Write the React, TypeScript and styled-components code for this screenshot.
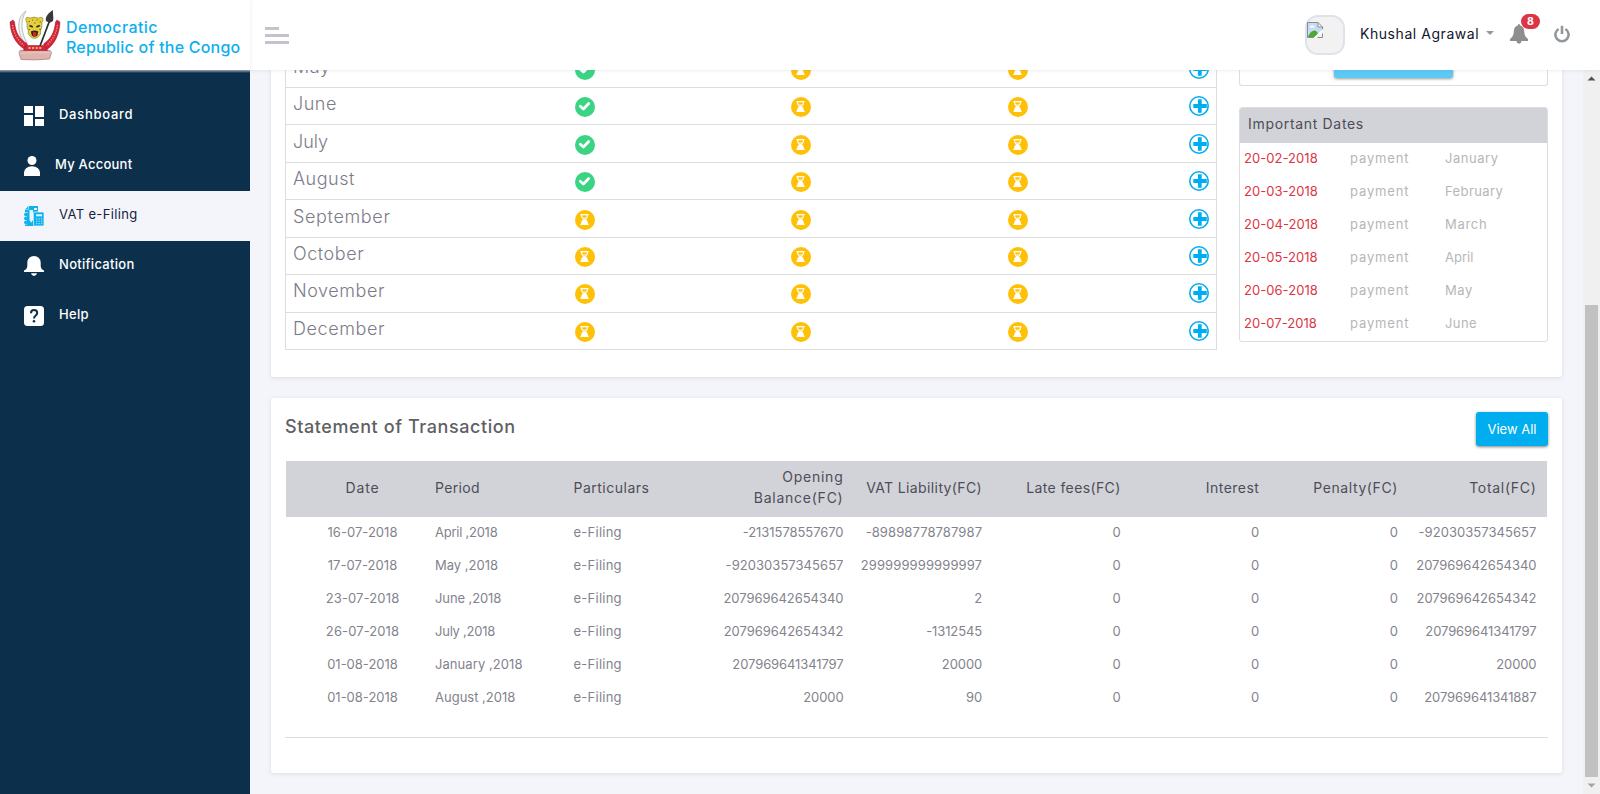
import React from "react";
import styled, { createGlobalStyle } from "styled-components";

const GlobalStyle = createGlobalStyle`
  *, *::before, *::after { box-sizing: border-box; }
  body {
    margin: 0;
    background: #f4f5fa;
    color: #83838d;
    font-family: Inter, "Liberation Sans", sans-serif;
    font-size: 13px;
    overflow: hidden;
  }
`;

/* ---------- text ---------- */

const Label = styled.span<{ $track?: number }>`
  letter-spacing: ${(p) => p.$track ?? 0}px;
  white-space: nowrap;
`;

/* ---------- page frame ---------- */

const Page = styled.div`
  display: flex;
  flex-direction: column;
  width: 1600px;
  height: 794px;
  overflow: hidden;
`;

const TopBar = styled.header`
  display: flex;
  flex: 0 0 70px;
  background: #fff;
  position: relative;
  z-index: 2;
  box-shadow: 0 0 4px rgba(90, 90, 140, 0.16);
`;

const Brand = styled.div`
  display: flex;
  align-items: center;
  width: 250px;
  padding-left: 5px;
  box-shadow: 0 0 4px rgba(90, 90, 140, 0.14);
`;

const BrandName = styled.div`
  display: flex;
  flex-direction: column;
  padding-top: 3px;
  margin-left: 1px;
  color: #0eafee;
  font-size: 16px;
  font-weight: 500;
  line-height: 20px;
`;

const BarBody = styled.div`
  display: flex;
  flex: 1;
  align-items: center;
  justify-content: space-between;
  padding: 0 30px 0 15px;
`;

const Burger = styled.div`
  display: flex;
  flex-direction: column;
  gap: 4px;
  margin-top: 1px;
`;

const BurgerLine = styled.i<{ $w: number }>`
  width: ${(p) => p.$w}px;
  height: 3px;
  background: #c3c3ce;
`;

const UserArea = styled.div`
  display: flex;
  align-items: center;
`;

const Avatar = styled.div`
  width: 40px;
  height: 40px;
  padding: 5px 0 0;
  border: 2px solid #dfe2ea;
  border-radius: 13px;
  background: #f2f2f2;
`;

const UserName = styled.div`
  margin: 0 8px 3px 15px;
  width: 118px;
  color: #14142e;
  font-size: 14px;
`;

const Caret = styled.i`
  border: 4.5px solid transparent;
  border-top-color: #98989c;
  border-bottom: 0;
  margin: 0 15px 4px 0;
`;

const BellWrap = styled.div`
  position: relative;
  width: 20px;
  height: 20px;
  margin: 0 25px 2px 0;
`;

const Badge = styled.span`
  position: absolute;
  left: 12px;
  top: -10px;
  width: 19px;
  height: 15px;
  border-radius: 8px;
  background: #dc3545;
  color: #fff;
  font-size: 10.5px;
  font-weight: 700;
  line-height: 15px;
  text-align: center;
`;

const Body = styled.div`
  display: flex;
  flex: 1;
  min-height: 0;
`;

/* ---------- sidebar ---------- */

const Sidebar = styled.nav`
  width: 250px;
  padding-top: 21px;
  background: linear-gradient(#a3afba, #0c2f4c 3px);
`;

const NavItem = styled.div<{ $active?: boolean }>`
  display: flex;
  align-items: center;
  gap: 15px;
  height: 50px;
  padding-left: 24px;
  background: ${(p) => (p.$active ? "#f4f5fa" : "transparent")};
  color: ${(p) => (p.$active ? "#14213f" : "#fff")};
  font-weight: ${(p) => (p.$active ? 400 : 500)};
  svg { display: block; }
  span { padding-bottom: 5px; }
`;

/* ---------- content ---------- */

const Viewport = styled.main`
  flex: 1;
  min-width: 0;
  overflow: hidden;
`;

const Content = styled.div`
  display: flex;
  flex-direction: column;
  gap: 21px;
  margin-top: -20px;
  padding: 0 21px;
`;

const Card = styled.section`
  background: #fff;
  border-radius: 3px;
  box-shadow: 0 1px 4px rgba(60, 60, 90, 0.13);
`;

const FilingCard = styled(Card)`
  display: flex;
  align-items: flex-start;
  justify-content: space-between;
  height: 327px;
  padding: 0 14px;
`;

const MonthTable = styled.div`
  width: 932px;
  height: 300.4px;
  margin-top: -0.4px;
  display: grid;
  grid-template-rows: repeat(8, 1fr);
  border: 1px solid #dcdddf;
  border-top: 0;
`;

const MonthRow = styled.div`
  display: grid;
  grid-template-columns: 190.5px 216.5px 216.5px 216.5px 1fr;
  align-items: center;
  justify-items: center;
  border-top: 1px solid #dcdddf;
  svg { display: block; }
`;

const MonthName = styled.div`
  justify-self: start;
  padding: 0 0 5px 7px;
  font-size: 18px;
  font-weight: 300;
  color: #7c7c88;
`;

const StatusSlot = styled.div`
  padding-top: 2px;
`;

const AddSlot = styled.div`
  justify-self: end;
  padding-right: 7px;
`;

const SideColumn = styled.div`
  width: 309px;
`;

const ActionBox = styled.div`
  display: flex;
  justify-content: center;
  height: 36px;
  border: 1px solid #dcdddf;
  border-top: 0;
  border-radius: 0 0 3px 3px;
`;

const ActionButton = styled.div`
  width: 119px;
  height: 28px;
  border-radius: 3px;
  background: #5ccaf4;
  box-shadow: 0 1px 3px rgba(0, 0, 0, 0.4);
`;

const DatesBox = styled.div`
  margin-top: 21px;
  border: 1px solid #dcdddf;
  border-radius: 3px;
  overflow: hidden;
`;

const DatesHead = styled.div`
  display: flex;
  align-items: center;
  height: 35px;
  padding: 0 0 4px 8px;
  background: #d2d3d9;
  color: #4d4d57;
  font-size: 14px;
`;

const DateRow = styled.div`
  display: grid;
  grid-template-columns: 106px 95px 1fr;
  align-items: center;
  height: 33px;
  padding: 0 0 4px 4px;
  color: #b6b6ba;
`;

const DueDate = styled(Label)`
  color: #dc3545;
`;

const StatementCard = styled(Card)`
  height: 375px;
  padding: 14px 14px 0;
`;

const StatementHead = styled.div`
  display: flex;
  justify-content: space-between;
  align-items: flex-start;
  height: 49px;
`;

const Title = styled.h2`
  margin: 4px 0 0;
  color: #5f5f64;
  font-size: 18px;
  font-weight: 500;
  line-height: 22px;
`;

const ViewAll = styled.button`
  width: 72px;
  height: 34px;
  padding: 0;
  border: 0;
  border-radius: 3px;
  background: #00aeef;
  box-shadow: 0 1px 3px rgba(0, 0, 0, 0.5);
  color: #fff;
  font: 400 13px/34px Inter, sans-serif;
`;

const Ledger = styled.div`
  margin: 0 1px;
`;

const LedgerRow = styled.div<{ $head?: boolean }>`
  display: grid;
  grid-template-columns: 139px 138.5px 138.5px 152px repeat(5, 138.6px);
  align-items: center;
  height: ${(p) => (p.$head ? 56 : 33)}px;
  padding-bottom: ${(p) => (p.$head ? 4 : 2)}px;
  background: ${(p) => (p.$head ? "#d2d3d9" : "transparent")};
  color: ${(p) => (p.$head ? "#4d4d57" : "#83838d")};
  font-size: ${(p) => (p.$head ? 14 : 13)}px;
  line-height: 21px;
`;

const Cell = styled.div<{ $align: string }>`
  text-align: ${(p) => p.$align};
  padding: ${(p) => (p.$align === "center" ? "0 0 0 14px" : p.$align === "left" ? "0 10px" : "0 10.500px 0 0")};
`;

const Rule = styled.div`
  margin-top: 22px;
  border-top: 1px solid #dcdddf;
`;

/* ---------- scrollbar ---------- */

const ScrollBar = styled.div`
  display: flex;
  flex-direction: column;
  align-items: center;
  width: 17px;
  background: #f0f0f1;
`;

const ScrollArrow = styled.div`
  display: flex;
  align-items: center;
  justify-content: center;
  height: 17px;
`;

const ScrollThumb = styled.div`
  width: 13px;
  height: 472px;
  margin: 218px 0 0;
  background: #c1c1c1;
`;

/* ---------- drawings ---------- */

const Emblem = () => (
  <svg width="60" height="60" viewBox="0 0 60 60">
    <path d="M21 6C11 12 12 28 20 39L22 38C16 28 15 15 21 6Z" fill="#f1f2f2" stroke="#a9aeb1" strokeWidth="0.8" />
    <path d="M44.500 16L35 41" stroke="#2b2c2d" strokeWidth="1.7" />
    <path d="M48 5C43 8 40 12 41 16L44.500 18L48 16C49 12 47.500 9 48 5Z" fill="#38393a" />
    <path d="M21.500 14Q23 12.500 25.500 14.200Q29.500 12 34 14.200Q36.500 12.500 38.300 14Q38.800 16.500 37.300 19Q38 23 36 26.500V30Q33.500 34.500 30 34.500Q26 34 23.800 30V26.500Q21.800 23 22.600 19Q20.800 16.500 21.500 14Z" transform="translate(-0.500 -1)" fill="#e3d03c" stroke="#94852f" strokeWidth="0.7" />
    <path d="M24.500 20.500L27.800 22M34.700 20.500L31.500 22" stroke="#222" strokeWidth="1.500" />
    <path d="M23.500 16.500H25M27 15H28.300M31.500 15H32.800M34.500 17H36M29 18H30.500M23.500 24.500H25M34.300 24.500H36" stroke="#6f6428" strokeWidth="0.9" />
    <path d="M25.800 26.500Q29.500 24.500 33.300 26.500L32.400 30.500Q29.500 33 26.800 30.500Z" fill="#3b241c" />
    <path d="M27.800 27.200H31.400L30.800 31H28.400Z" fill="#e02030" />
    <path d="M5 17L8 15L9.500 17C10.500 27 14 34 22.500 39L20 44.500C10.500 39 5.500 29 5 17Z" fill="#d6213f" stroke="#8d1c2e" strokeWidth="0.5" />
    <path d="M55 17L52 15L50.500 17C49.500 27 46 34 38.500 39L42 44.500C50 39 54.500 29 55 17Z" fill="#d6213f" stroke="#8d1c2e" strokeWidth="0.5" />
    <path d="M7.600 20C8.800 29 12.500 35 19 40.500" fill="none" stroke="#e9a84a" strokeWidth="1.400" strokeDasharray="1.300 1.300" />
    <path d="M52.400 20C51.200 29 47.500 35 41.500 40.500" fill="none" stroke="#e9a84a" strokeWidth="1.400" strokeDasharray="1.300 1.300" />
    <path d="M15 45.500Q30 43.500 45 45.500L46.500 47.500L44.500 54Q30 55.500 16 54.500L14 48Z" fill="#dfb3ae" stroke="#a98480" strokeWidth="0.8" />
    <path d="M14.500 48.500Q30 47 46 48" fill="none" stroke="#eccac5" strokeWidth="0.8" />
    <path d="M20.500 40.500H40L42.500 45.500H18.500Z" fill="#d6213f" stroke="#8d1c2e" strokeWidth="0.5" />
    <path d="M23.500 43H36.500" stroke="#f0bb4e" strokeWidth="2.200" strokeDasharray="2 1.600" />
  </svg>
);

const BrokenImage = () => (
  <svg width="16" height="16" viewBox="0 0 16 16" style={{ display: "block" }}>
    <path d="M0.500 0.500H11L15.500 5V8.500L8 15.500H0.500Z" fill="#c5dcf7" />
    <path d="M2.500 5.500Q2.500 4 4 4Q5 2.300 6.500 4Q8 4 8 5.500Z" fill="#fff" />
    <path d="M1 14.500Q4 8 8 8.500Q10.500 9 11 12L8 15H1Z" fill="#4fa834" />
    <path d="M11 0.500V5H15.500Z" fill="#fff" />
    <path d="M15.500 8V5L11 0.500H0.500V15.500H7M11 0.500V5H15.500M10.500 15.500H15.500V11.500" fill="none" stroke="#8b8d90" />
    <path d="M7 16.500L16.500 7.500" stroke="#fff" strokeWidth="1.500" />
  </svg>
);

const BellSolid = () => (
  <svg width="20" height="20" viewBox="0 0 20 20">
    <path d="M8.700 1.600Q8.700 0 10 0Q11.300 0 11.300 1.600Q15 2.600 15.200 7.500Q15.300 12.500 19 15V17H1V15Q4.700 12.500 4.800 7.500Q5 2.600 8.700 1.600ZM7.500 17H12.500Q12.300 19.700 10 19.700Q7.700 19.700 7.500 17Z" fill="#8e8e8e" />
  </svg>
);

const Power = () => (
  <svg width="16" height="20" viewBox="0 0 16 20">
    <path d="M4.600 4A6.600 6.600 0 1 0 11.400 4" fill="none" stroke="#92979b" strokeWidth="2.600" />
    <path d="M8 0.800V9" stroke="#92979b" strokeWidth="2.600" />
  </svg>
);

const DashboardIcon = () => (
  <svg width="20" height="20" viewBox="0 0 20 20" fill="#fff">
    <path d="M0 0H9V7H0ZM11 0H20V11H11ZM0 9H9V20H0ZM11 13H20V20H11Z" />
  </svg>
);

const PersonIcon = () => (
  <svg width="16" height="20" viewBox="0 0 16 20" fill="#fff">
    <circle cx="8" cy="4.500" r="4.500" />
    <path d="M0 20V16.500Q0.800 10.500 8 10.300Q15.200 10.500 16 16.500V20Z" />
  </svg>
);

const FilingIcon = () => (
  <svg width="20" height="20" viewBox="0 0 20 20">
    <path d="M4.500 0H14V6H10V20H1V17.500H0V15.500H1V13.500H0V11.500H1V9.500H0V7.500H1V3.500Z" fill="#10b2ee" />
    <path d="M1 3.500H4.500V0M1 6.500H4M1 10.500H3M1 14.500H3M1 18.300H3" fill="none" stroke="#a5e2f8" strokeWidth="0.8" />
    <path d="M5.500 4H9V14L7.200 16.800L5.500 14ZM10 2H13V4H10Z" fill="#e7f5fc" />
    <rect x="9.500" y="6" width="10.500" height="14" rx="1" fill="#10b2ee" stroke="#f4f5fa" strokeWidth="0.7" />
    <rect x="12" y="8.300" width="6" height="2" fill="#e7f5fc" />
    <path d="M12 13H18.500M12 15.300H18.500M12 17.600H18.500" stroke="#a5e2f8" strokeWidth="1" strokeDasharray="1.300 1.200" />
  </svg>
);

const NotificationIcon = () => (
  <svg width="20" height="20" viewBox="0 0 20 20" fill="#fff">
    <path d="M0 16V14.500Q3 13.500 3.300 10V6.500Q4 0 10 0Q16 0 16.700 6.500V10Q17 13.500 20 14.500V16ZM7 17.300H13Q12.500 20 10 20Q7.500 20 7 17.300Z" />
  </svg>
);

const HelpIcon = () => (
  <svg width="20" height="20" viewBox="0 0 20 20">
    <rect width="20" height="20" rx="3.500" fill="#fff" />
    <path d="M7 7.200Q7 4 10 4Q13.200 4 13.200 6.800Q13.200 8.500 11.500 9.700Q10 10.800 10 12.500" fill="none" stroke="#0c2f4c" strokeWidth="2" />
    <circle cx="10" cy="15.300" r="1.300" fill="#0c2f4c" />
  </svg>
);

const DoneIcon = () => (
  <svg width="20" height="20" viewBox="0 0 20 20">
    <circle cx="10" cy="10" r="10" fill="#3bd485" />
    <path d="M5.300 9.300L8.400 12L13.700 6.600" fill="none" stroke="#fff" strokeWidth="2.800" strokeLinecap="round" strokeLinejoin="round" />
  </svg>
);

const PendingIcon = () => (
  <svg width="20" height="20" viewBox="0 0 20 20">
    <circle cx="10" cy="10" r="10" fill="#ffc107" />
    <path d="M5.500 4.700H13.500" stroke="#fff" strokeWidth="1.300" />
    <path d="M6.400 5Q6.500 8 8.700 9.300M12.600 5Q12.500 8 10.300 9.300" fill="none" stroke="#fff" strokeWidth="1.100" />
    <path d="M8 7.400H11L9.500 8.700Z" fill="#fff" />
    <path d="M8.500 9H10.500Q12.800 10.300 13 13.800H13.600V15H5.400V13.800H6Q6.200 10.300 8.500 9Z" fill="#fff" />
  </svg>
);

const AddIcon = () => (
  <svg width="20" height="20" viewBox="0 0 20 20">
    <circle cx="10" cy="10" r="9.200" fill="#fff" stroke="#00aeef" strokeWidth="1.600" />
    <path d="M10.800 3.300V16.700M4.300 10H17.800" stroke="#00aeef" strokeWidth="3.800" />
  </svg>
);

/* ---------- data ---------- */

type Txt = [string, number?];

const navItems: { text: Txt; icon: React.ReactNode; active?: boolean }[] = [
  { text: ["Dashboard", 0.72], icon: <DashboardIcon /> },
  { text: ["My Account", 0.24], icon: <PersonIcon /> },
  { text: ["VAT e-Filing", 0.36], icon: <FilingIcon />, active: true },
  { text: ["Notification", 0.3], icon: <NotificationIcon /> },
  { text: ["Help", 0.3], icon: <HelpIcon /> },
];

const months: { name: Txt; filed?: boolean }[] = [
  { name: ["May", 0.6], filed: true },
  { name: ["June", 0.5], filed: true },
  { name: ["July", 0], filed: true },
  { name: ["August", 0.5], filed: true },
  { name: ["September", 0.64] },
  { name: ["October", 0.55] },
  { name: ["November", 0.55] },
  { name: ["December", 0.6] },
];

const dueDates: { date: string; month: Txt }[] = [
  { date: "20-02-2018", month: ["January", 0.54] },
  { date: "20-03-2018", month: ["February", 0.4] },
  { date: "20-04-2018", month: ["March", 0.7] },
  { date: "20-05-2018", month: ["April", 0.03] },
  { date: "20-06-2018", month: ["May", 0.6] },
  { date: "20-07-2018", month: ["June", 0.4] },
];

const headings: Txt[] = [
  ["Date", 0.8], ["Period", 0.35], ["Particulars", 0.5], ["Opening Balance(FC)", 0.76],
  ["VAT Liability(FC)", 0.38], ["Late fees(FC)", 0.38], ["Interest", 0.45], ["Penalty(FC)", 0.58], ["Total(FC)", 0.7],
];

const zero: Txt = ["0"];
const filing: Txt = ["e-Filing", 0.25];

const transactions: Txt[][] = [
  [["16-07-2018", 0.03], ["April ,2018", -0.25], filing, ["-2131578557670", -0.06], ["-89898778787987", 0.1], zero, zero, zero, ["-92030357345657", 0.05]],
  [["17-07-2018", 0.07], ["May ,2018"], filing, ["-92030357345657", 0.05], ["299999999999997", 0.1], zero, zero, zero, ["207969642654340", -0.03]],
  [["23-07-2018", 0.14], ["June ,2018", -0.1], filing, ["207969642654340", -0.04], ["2"], zero, zero, zero, ["207969642654342", -0.03]],
  [["26-07-2018", 0.1], ["July ,2018", -0.24], filing, ["207969642654342", -0.04], ["-1312545", -0.1], zero, zero, zero, ["207969641341797", -0.1]],
  [["01-08-2018"], ["January ,2018", 0.07], filing, ["207969641341797", -0.1], ["20000", -0.1], zero, zero, zero, ["20000", -0.1]],
  [["01-08-2018"], ["August ,2018"], filing, ["20000", -0.1], ["90", -0.1], zero, zero, zero, ["207969641341887", -0.1]],
];

const alignOf = (column: number) => (column === 0 ? "center" : column < 3 ? "left" : "right");

const HeadLabel = styled(Label)`
  white-space: normal;
`;

export default function App() {
  return (
    <Page>
      <GlobalStyle />
      <TopBar>
        <Brand>
          <Emblem />
          <BrandName>
            <Label $track={0.38}>Democratic</Label>
            <Label $track={0.22}>Republic of the Congo</Label>
          </BrandName>
        </Brand>
        <BarBody>
          <Burger>
            <BurgerLine $w={14} />
            <BurgerLine $w={24} />
            <BurgerLine $w={24} />
          </Burger>
          <UserArea>
            <Avatar><BrokenImage /></Avatar>
            <UserName><Label $track={0.55}>Khushal Agrawal</Label></UserName>
            <Caret />
            <BellWrap>
              <BellSolid />
              <Badge>8</Badge>
            </BellWrap>
            <Power />
          </UserArea>
        </BarBody>
      </TopBar>

      <Body>
        <Sidebar>
          {navItems.map(({ text, icon, active }) => (
            <NavItem key={text[0]} $active={active}>
              {icon}
              <Label $track={text[1]}>{text[0]}</Label>
            </NavItem>
          ))}
        </Sidebar>

        <Viewport>
          <Content>
            <FilingCard>
              <MonthTable>
                {months.map(({ name, filed }) => (
                  <MonthRow key={name[0]}>
                    <MonthName><Label $track={name[1]}>{name[0]}</Label></MonthName>
                    <StatusSlot>{filed ? <DoneIcon /> : <PendingIcon />}</StatusSlot>
                    <StatusSlot><PendingIcon /></StatusSlot>
                    <StatusSlot><PendingIcon /></StatusSlot>
                    <AddSlot><AddIcon /></AddSlot>
                  </MonthRow>
                ))}
              </MonthTable>
              <SideColumn>
                <ActionBox><ActionButton /></ActionBox>
                <DatesBox>
                  <DatesHead><Label $track={0.68}>Important Dates</Label></DatesHead>
                  {dueDates.map(({ date, month }) => (
                    <DateRow key={date}>
                      <DueDate $track={0.05}>{date}</DueDate>
                      <Label $track={0.85}>payment</Label>
                      <Label $track={month[1]}>{month[0]}</Label>
                    </DateRow>
                  ))}
                </DatesBox>
              </SideColumn>
            </FilingCard>

            <StatementCard>
              <StatementHead>
                <Title><Label $track={0.58}>Statement of Transaction</Label></Title>
                <ViewAll>View All</ViewAll>
              </StatementHead>
              <Ledger>
                <LedgerRow $head>
                  {headings.map(([text, track], i) => (
                    <Cell key={text} $align={alignOf(i)}><HeadLabel $track={track}>{text}</HeadLabel></Cell>
                  ))}
                </LedgerRow>
                {transactions.map((row, r) => (
                  <LedgerRow key={r}>
                    {row.map(([text, track], i) => (
                      <Cell key={i} $align={alignOf(i)}><Label $track={track}>{text}</Label></Cell>
                    ))}
                  </LedgerRow>
                ))}
              </Ledger>
              <Rule />
            </StatementCard>
          </Content>
        </Viewport>

        <ScrollBar>
          <ScrollArrow>
            <svg width="9" height="5" viewBox="0 0 9 5"><path d="M0.500 4.500L4.500 0.500L8.500 4.500Z" fill="#505050" /></svg>
          </ScrollArrow>
          <ScrollThumb />
          <ScrollArrow>
            <svg width="9" height="5" viewBox="0 0 9 5"><path d="M0.500 0.500L4.500 4.500L8.500 0.500Z" fill="#a3a3a3" /></svg>
          </ScrollArrow>
        </ScrollBar>
      </Body>
    </Page>
  );
}
